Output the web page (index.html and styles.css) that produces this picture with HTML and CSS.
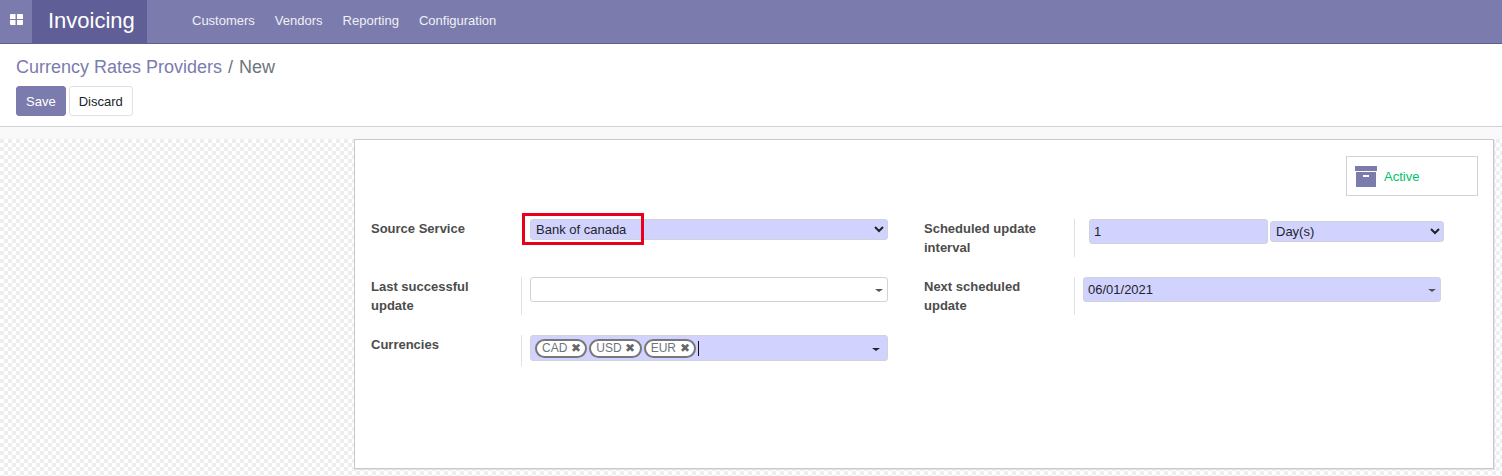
FILE: index.html
```html
<!DOCTYPE html>
<html lang="en">
  <head>
    <meta charset="UTF-8" />
    <title>Currency Rates Providers - Invoicing</title>
    <link rel="stylesheet" href="styles.css">
  </head>

  <body>
    <header class="navbar">
      <a class="apps-toggle">
        <svg width="13" height="11" viewBox="0 0 13 11"><path fill="#fff" d="M1 0h4.500v5H0V1a1 1 0 0 1 1-1zM7 0h5a1 1 0 0 1 1 1v4H7zM0 6h5.500v5H1a1 1 0 0 1-1-1zM7 6h6v4a1 1 0 0 1-1 1H7z"/></svg>
      </a>
      <a class="brand">Invoicing</a>
      <nav class="menu">
        <a>Customers</a>
        <a>Vendors</a>
        <a>Reporting</a>
        <a>Configuration</a>
      </nav>
    </header>

    <section class="control-panel">
      <div class="breadcrumb">
        <a>Currency Rates Providers</a>
        <span class="sep">/</span>
        <span class="current">New</span>
      </div>
      <div class="buttons">
        <button class="btn btn-primary">Save</button>
        <button class="btn btn-secondary">Discard</button>
      </div>
    </section>

    <main class="content">
      <div class="sheet">
        <div class="button-box">
          <div class="stat-button">
            <svg width="22" height="21" viewBox="0 0 22 21"><path fill="#7c7bad" d="M0 0h22v5H0zM1 6h20v15H1zM8 9v2h6V9z" fill-rule="evenodd"/></svg>
            <span>Active</span>
          </div>
        </div>

        <div class="form-grid">
          <div class="form-col">
            <div class="form-row">
              <label class="no-rule">Source Service</label>
              <div class="field">
                <div class="input select required">Bank of canada<svg class="chevron" width="10" height="7" viewBox="0 0 10 7"><path d="M1 1l4 4 4-4" fill="none" stroke="#222" stroke-width="2"/></svg></div>
                <div class="highlight"></div>
              </div>
            </div>
            <div class="form-row">
              <label>Last successful update</label>
              <div class="field">
                <div class="input tall"><span class="caret"></span></div>
              </div>
            </div>
            <div class="form-row">
              <label>Currencies</label>
              <div class="field field-short">
                <div class="input required tags">
                  <span class="tag">CAD <b>✖</b></span>
                  <span class="tag">USD <b>✖</b></span>
                  <span class="tag">EUR <b>✖</b></span>
                  <span class="cursor"></span>
                  <span class="caret dark"></span>
                </div>
              </div>
            </div>
          </div>

          <div class="form-col">
            <div class="form-row">
              <label>Scheduled update interval</label>
              <div class="field interval">
                <div class="input required tall number">1</div>
                <div class="input select required select-unit">Day(s)<svg class="chevron" width="10" height="7" viewBox="0 0 10 7"><path d="M1 1l4 4 4-4" fill="none" stroke="#222" stroke-width="2"/></svg></div>
              </div>
            </div>
            <div class="form-row">
              <label>Next scheduled update</label>
              <div class="field">
                <div class="input required tall date">06/01/2021<span class="caret"></span></div>
              </div>
            </div>
          </div>
        </div>
      </div>
    </main>
  </body>
</html>
```

FILE: styles.css
```css
* {
  box-sizing: border-box;
}

html,
body {
  height: 100%;
}

body {
  display: flex;
  flex-direction: column;
  margin: 0;
  overflow: hidden;
  font-family: "Liberation Sans", Arial, sans-serif;
  font-size: 13px;
  color: #4c4c4c;
  background: #fff;
}

/* Top bar */
.navbar {
  display: flex;
  align-items: stretch;
  height: 44px;
  flex-shrink: 0;
  background: #7c7bad;
  border-bottom: 1px solid #5f5e8f;
  color: #fff;
}

.apps-toggle {
  display: flex;
  align-items: center;
  justify-content: center;
  width: 32px;
  padding-bottom: 4px;
}

.brand {
  display: flex;
  align-items: center;
  width: 115px;
  padding-left: 16px;
  padding-bottom: 2px;
  font-size: 22px;
  background: #5f5e97;
}

.menu {
  display: flex;
  align-items: center;
  gap: 20px;
  margin-left: 45px;
  padding-bottom: 2px;
  font-size: 13px;
  color: #f0f0f5;
}

/* Breadcrumb and buttons */
.control-panel {
  height: 83px;
  flex-shrink: 0;
  padding: 13px 16px 0;
  background: #fff;
  border-bottom: 1px solid #ced4da;
}

.breadcrumb {
  display: flex;
  gap: 6px;
  height: 29px;
  font-size: 18px;
  line-height: 20px;
  color: #7c7bad;
}

.breadcrumb .sep,
.breadcrumb .current {
  color: #6c757d;
}

.buttons {
  display: flex;
  gap: 3px;
}

.btn {
  height: 30px;
  padding: 0 9px;
  font-family: inherit;
  font-size: 13px;
  border-radius: 3px;
}

.btn-primary {
  color: #fff;
  background: #7c7bad;
  border: 1px solid #7c7bad;
}

.btn-secondary {
  color: #212529;
  background: #fff;
  border: 1px solid #dee2e6;
}

/* Form area: flat strip on top, checker pattern below */
.content {
  flex: 1;
  padding: 12px 8px 7px 354px;
  background-color: #fff;
  background-image:
    linear-gradient(#f9f9f9 12px, transparent 12px),
    conic-gradient(#eee 25%, #fff 0 50%, #eee 0 75%, #fff 0);
  background-size: 100% 100%, 8px 8px;
}

.sheet {
  height: 100%;
  padding: 16px 15px 0 16px;
  background: #fff;
  border: 1px solid #c8c8d0;
  box-shadow: 1px 1px 0 #e2e2e8;
}

.button-box {
  display: flex;
  justify-content: flex-end;
  height: 40px;
  margin-bottom: 23px;
}

.stat-button {
  display: flex;
  align-items: center;
  gap: 7px;
  width: 132px;
  padding-left: 8px;
  color: #00c268;
  border: 1px solid #ced4da;
}

.form-grid {
  display: grid;
  grid-template-columns: 517px 1fr;
  column-gap: 36px;
}

.form-row {
  display: flex;
  align-items: flex-start;
  height: 58px;
}

.form-row label {
  width: 150px;
  height: 38px;
  padding-right: 30px;
  font-weight: bold;
  line-height: 19px;
  flex-shrink: 0;
}

.field {
  position: relative;
  width: 367px;
  min-height: 38px;
  padding-left: 8px;
  border-left: 1px solid #dee2e6;
}

.field-short {
  min-height: 31px;
}

.no-rule + .field {
  border-left-color: transparent;
}

.input {
  position: relative;
  display: flex;
  align-items: center;
  height: 25px;
  padding-left: 5px;
  color: #212529;
  background: #fff;
  border: 1px solid #ced4da;
  border-radius: 3px;
}

.required {
  background: #d2d2ff;
}

.select {
  height: 21px;
}

.chevron {
  position: absolute;
  right: 3px;
  top: 6px;
}

.caret {
  position: absolute;
  right: 4px;
  top: 11px;
  border-top: 3px solid #555;
  border-left: 4px solid transparent;
  border-right: 4px solid transparent;
}

.caret.dark {
  right: 7px;
  top: 12px;
  border-top-color: #222;
}

/* Red box drawn over the screenshot */
.highlight {
  position: absolute;
  left: 0;
  top: -6px;
  width: 122px;
  height: 32px;
  border: 3px solid #e8001c;
}

.tags {
  gap: 2px;
  height: 26px;
  padding-left: 4px;
}

.tag {
  display: flex;
  align-items: center;
  gap: 3.5px;
  height: 19px;
  padding: 0 4.5px 0 5px;
  font-size: 12px;
  color: #6c757d;
  background: #fff;
  border: 2px solid #777;
  border-radius: 10px;
}

.tag b {
  font-size: 12px;
  font-weight: normal;
  color: #666;
}

.cursor {
  width: 1px;
  height: 15px;
  background: #111;
}

.interval {
  display: flex;
  align-items: flex-start;
  gap: 2px;
  padding-left: 14px;
}

.number {
  flex-shrink: 0;
  width: 179px;
  padding-left: 4px;
}

.select-unit {
  flex-shrink: 0;
  width: 174px;
  margin-top: 2px;
}

.date {
  padding-left: 4px;
}
```
